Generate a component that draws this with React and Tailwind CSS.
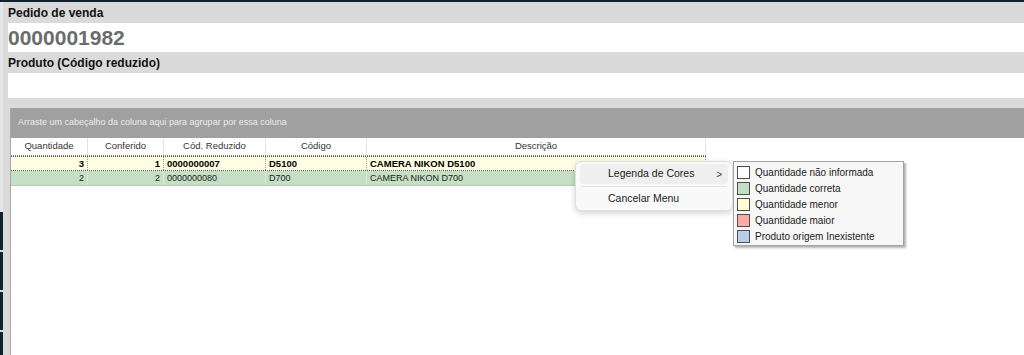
import React from 'react';

const cols = [
  { key: 'qtd', label: 'Quantidade', w: 'w-[77px]', align: 'text-right' },
  { key: 'conf', label: 'Conferido', w: 'w-[76px]', align: 'text-right' },
  { key: 'cod', label: 'Cód. Reduzido', w: 'w-[102px]', align: 'text-left' },
  { key: 'codigo', label: 'Código', w: 'w-[101px]', align: 'text-left' },
  { key: 'desc', label: 'Descrição', w: 'w-[339px]', align: 'text-left' },
];

const rows = [
  { qtd: '3', conf: '1', cod: '0000000007', codigo: 'D5100', desc: 'CAMERA NIKON D5100', focused: true },
  { qtd: '2', conf: '2', cod: '0000000080', codigo: 'D700', desc: 'CAMERA NIKON D700', focused: false },
];

const legenda = [
  { label: 'Quantidade não informada', color: 'bg-white' },
  { label: 'Quantidade correta', color: 'bg-[#c3dfc3]' },
  { label: 'Quantidade menor', color: 'bg-[#fffdd8]' },
  { label: 'Quantidade maior', color: 'bg-[#ffaaa2]' },
  { label: 'Produto origem Inexistente', color: 'bg-[#b9cfe9]' },
];

const App = () => {
  return (
    <div className="w-[1024px] h-[355px] bg-[#dadada] flex flex-col overflow-hidden relative font-['Liberation_Sans',Arial,sans-serif]">
      {/* top bar */}
      <div className="h-[2px] bg-[#0f2230]"></div>

      <div className="flex flex-1">
        {/* left strip */}
        <div className="w-[3px] flex flex-col">
          <div className="h-[210px] bg-[#e6e6e6]"></div>
          <div className="h-[38px] bg-[#0e2230] mb-[2px]"></div>
          <div className="h-[38px] bg-[#0e2230] mb-[2px]"></div>
          <div className="h-[38px] bg-[#0e2230] mb-[2px]"></div>
          <div className="flex-1 bg-[#0e2230]"></div>
        </div>

        <div className="flex-1 flex flex-col">
          {/* form fields */}
          <div className="pl-[5px] flex flex-col">
            <div className="h-[21px] flex items-center text-[12px] font-bold text-[#111]">Pedido de venda</div>
            <div className="h-[29px] bg-white flex items-center text-[21px] font-bold text-[#6c6c6c] leading-none">0000001982</div>
            <div className="h-[21px] flex items-center text-[12px] font-bold text-[#111]">Produto (Código reduzido)</div>
            <div className="h-[25px] bg-white"></div>
          </div>

          {/* grid */}
          <div className="mt-[10px] ml-[7px] flex-1 flex flex-col border-l border-[#a9a9a9] bg-white">
            <div className="h-[30px] bg-[#a0a0a0] flex items-center pl-[7px] text-[9px] text-[#ececec]">
              Arraste um cabeçalho da coluna aqui para agrupar por essa coluna
            </div>
            <div className="flex w-[695px] h-[18px] border-b border-dotted border-[#888] text-[9.5px] text-[#333]">
              {cols.map((c) => (
                <div key={c.key} className={`${c.w} border-r border-[#e2e2e2] flex items-center justify-center`}>
                  {c.label}
                </div>
              ))}
            </div>
            {rows.map((r, i) => (
              <div
                key={i}
                className={
                  r.focused
                    ? 'flex h-[15px] w-[695px] bg-[#fffde2] border-y border-dotted border-[#555] font-bold text-[9.5px] text-black'
                    : 'flex h-[15px] w-[695px] bg-[#c5dfc5] text-[9px] text-[#222] border-b border-[#b5ccb5]'
                }
              >
                {cols.map((c) => (
                  <div
                    key={c.key}
                    className={`${c.w} ${c.align} border-r ${r.focused ? 'border-dotted border-[#999]' : 'border-[#d8ead8]'} px-[3px] flex items-center ${c.align === 'text-right' ? 'justify-end' : 'justify-start'} leading-none`}
                  >
                    {r[c.key]}
                  </div>
                ))}
              </div>
            ))}
          </div>
        </div>
      </div>

      {/* context menu */}
      <div className="absolute left-[575px] top-[161px] w-[158px] h-[50px] bg-[#f9f9f9] border border-[#dedede] rounded-[6px] shadow-[0_2px_6px_rgba(0,0,0,0.18)] text-[10.5px] text-[#1b1b1b] flex flex-col px-[4px] pt-[2px]">
        <div className="h-[20px] bg-[#efefef] rounded-[4px] flex items-center pl-[28px] pr-[6px] justify-between">
          <span>Legenda de Cores</span>
          <span className="text-[10px] text-[#444]">&gt;</span>
        </div>
        <div className="h-[1px] bg-[#e3e3e3] my-[2px] mx-[1px]"></div>
        <div className="h-[20px] flex items-center pl-[28px]">Cancelar Menu</div>
      </div>

      {/* submenu */}
      <div className="absolute left-[733px] top-[161px] w-[171px] bg-[#f7f7f7] border border-[#a3a3a3] shadow-[2px_2px_2px_rgba(0,0,0,0.3)] flex flex-col pt-[2px] pb-[1px] pl-[3px] text-[10px] text-[#1b1b1b]">
        {legenda.map((l) => (
          <div key={l.label} className="h-[16px] flex items-center gap-[5px]">
            <div className={`w-[13px] h-[13px] border border-[#4d4d4d] ${l.color}`}></div>
            <span>{l.label}</span>
          </div>
        ))}
      </div>
    </div>
  );
};

export default App;
